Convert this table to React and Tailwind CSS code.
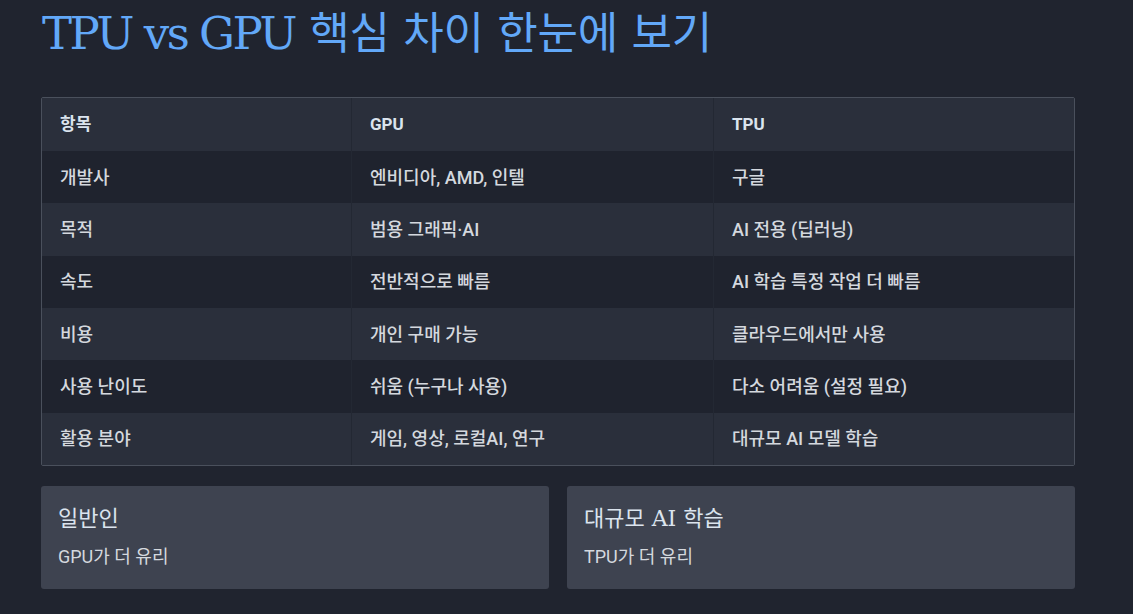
import React from "react";

const rows = [
  ["개발사", "엔비디아, AMD, 인텔", "구글"],
  ["목적", "범용 그래픽·AI", "AI 전용 (딥러닝)"],
  ["속도", "전반적으로 빠름", "AI 학습 특정 작업 더 빠름"],
  ["비용", "개인 구매 가능", "클라우드에서만 사용"],
  ["사용 난이도", "쉬움 (누구나 사용)", "다소 어려움 (설정 필요)"],
  ["활용 분야", "게임, 영상, 로컬AI, 연구", "대규모 AI 모델 학습"],
];

const sans = "font-['Roboto','Noto_Sans_CJK_KR',sans-serif]";
const slab = "font-['DejaVu_Serif','Noto_Sans_CJK_KR',serif]";

export default function App() {
  return (
    <div className={`min-h-[614px] w-full bg-[#20242f] ${sans}`}>
      <div className="ml-[41px] w-[1034px] pt-[6px]">
        <h1 className={`${slab} text-[45px] leading-[56px] text-[#62a8f8] ml-[1px] font-normal`}>
          <span className="tracking-[-2.5px]">TPU vs GPU</span>{" "}
          <span className="text-[44px] tracking-[-0.3px]">핵심 차이 한눈에 보기</span>
        </h1>
        <div className="mt-[35px] border border-[#4a505c] rounded-[2px] overflow-hidden">
          <div className="grid grid-cols-[310px_362px_1fr] bg-[#2a2f3b] h-[53px] items-stretch">
            {["항목", "GPU", "TPU"].map((h, i) => (
              <div
                key={h}
                className={`flex items-center pl-[18px] text-[17px] font-bold text-[#dbe4ee] ${i < 2 ? "border-r border-[#232833]" : ""}`}
              >
                {h}
              </div>
            ))}
          </div>
          {rows.map((r, ri) => (
            <div
              key={ri}
              className={`grid grid-cols-[310px_362px_1fr] h-[52.34px] ${ri % 2 === 0 ? "bg-[#1f232e]" : "bg-[#2a2f3b]"}`}
            >
              {r.map((c, i) => (
                <div
                  key={i}
                  className={`flex items-center pl-[18px] text-[18px] font-medium text-[#d4d8de] ${i < 2 ? "border-r border-[#232833]" : ""}`}
                >
                  {c}
                </div>
              ))}
            </div>
          ))}
        </div>
        <div className="mt-[20px] grid grid-cols-2 gap-[18px]">
          {[
            ["일반인", "GPU가 더 유리"],
            ["대규모 AI 학습", "TPU가 더 유리"],
          ].map(([t, s]) => (
            <div key={t} className="bg-[#3e4350] rounded-[3px] h-[103px] px-[17px] pt-[18px]">
              <div className={`${slab} text-[22px] leading-[30px] text-[#dbe4ee]`}>{t}</div>
              <div className="mt-[10px] text-[18px] font-normal leading-[26px] text-[#d4d8de]">{s}</div>
            </div>
          ))}
        </div>
      </div>
    </div>
  );
}
